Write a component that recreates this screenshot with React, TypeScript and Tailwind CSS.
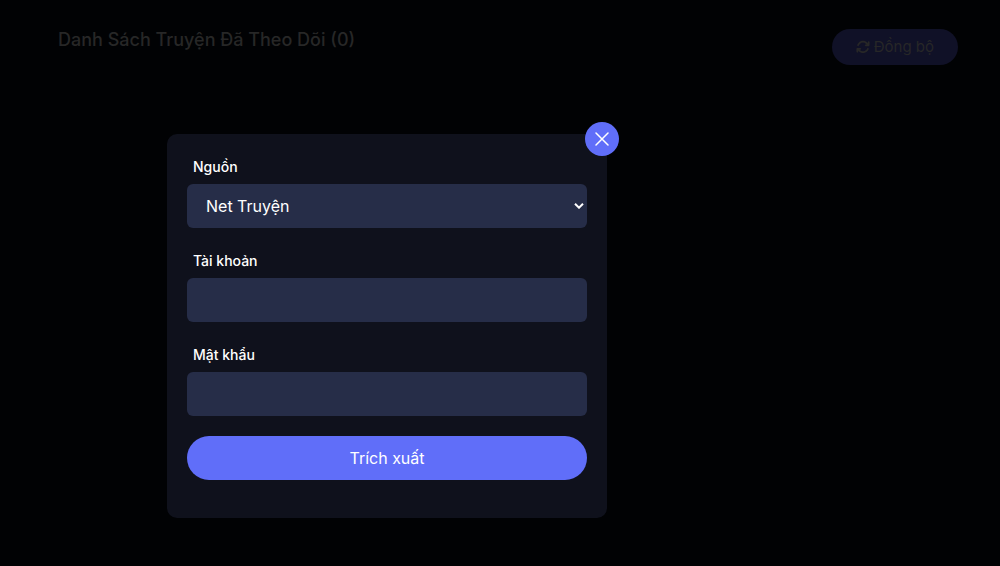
import { FaArrowsRotate } from "react-icons/fa6";

const fieldClass =
  "block h-11 w-full appearance-none rounded-md bg-[#262d48] px-[19px] text-base text-white outline-none";
const labelClass = "mb-2 block px-1.5 text-sm leading-[18px] font-medium";

export default function App() {
  return (
    <div className="min-h-screen bg-[#010204] font-['Inter','Noto_Sans',sans-serif] text-white">
      <header className="flex items-start justify-between pt-[29px] pr-[42px] pl-[58px]">
        <h1 className="text-lg leading-[22px] font-medium text-[#272727]">
          Danh Sách Truyện Đã Theo Dõi (0)
        </h1>
        <button
          type="button"
          className="flex h-9 items-center gap-1 rounded-full bg-[#101127] px-6 text-[15px] text-[#272727]"
        >
          <FaArrowsRotate className="size-3.5" aria-hidden="true" />
          Đồng bộ
        </button>
      </header>

      <div className="fixed inset-0 overflow-auto pt-[134px] pl-[167px]">
        <div
          role="dialog"
          aria-modal="true"
          className="relative w-full max-w-[440px] rounded-[10px] bg-[#0f111c] px-5 pt-6 pb-[38px]"
        >
          <button
            type="button"
            aria-label="Đóng"
            className="absolute -top-3 -right-3 flex size-[34px] items-center justify-center rounded-full bg-[#606ef9]"
          >
            <svg
              viewBox="0 0 14 14"
              className="size-3.5"
              fill="none"
              stroke="currentColor"
              strokeWidth="1.5"
              strokeLinecap="round"
              aria-hidden="true"
            >
              <path d="M1 1l12 12M13 1L1 13" />
            </svg>
          </button>

          <form onSubmit={(e) => e.preventDefault()}>
            <div className="mb-6">
              <label htmlFor="source" className={labelClass}>
                Nguồn
              </label>
              <div className="relative">
                <select id="source" className={fieldClass}>
                  <option>Net Truyện</option>
                </select>
                <svg
                  viewBox="0 0 10 6"
                  className="pointer-events-none absolute inset-y-0 right-[3px] my-auto h-1.5 w-2.5"
                  fill="none"
                  stroke="currentColor"
                  strokeWidth="2"
                  aria-hidden="true"
                >
                  <path d="M1 .7l4 4 4-4" />
                </svg>
              </div>
            </div>
            <div className="mb-6">
              <label htmlFor="account" className={labelClass}>
                Tài khoản
              </label>
              <input id="account" type="text" className={fieldClass} />
            </div>
            <div className="mb-5">
              <label htmlFor="password" className={labelClass}>
                Mật khẩu
              </label>
              <input id="password" type="password" className={fieldClass} />
            </div>
            <button
              type="submit"
              className="h-11 w-full rounded-full bg-[#606ef9] text-base"
            >
              Trích xuất
            </button>
          </form>
        </div>
      </div>
    </div>
  );
}
